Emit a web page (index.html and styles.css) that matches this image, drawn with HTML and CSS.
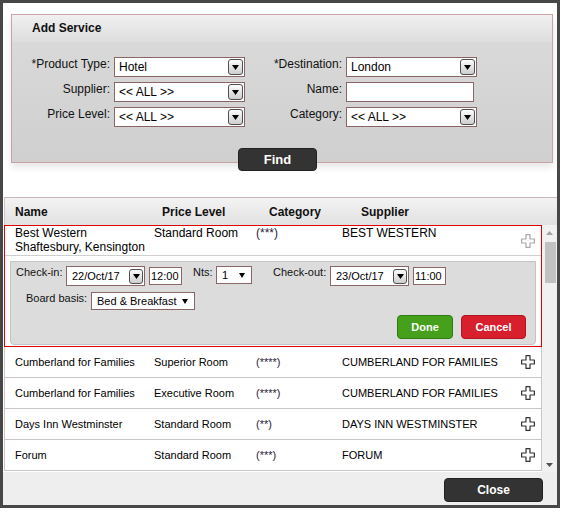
FILE: index.html
```html
<!DOCTYPE html>
<html>
<head>
<meta charset="utf-8">
<link rel="stylesheet" href="styles.css">
</head>
<body>
<div class="frame">
  <div class="search">
    <div class="search-title">Add Service</div>
    <div class="search-body">
      <div class="form">
        <label class="flabel">*Product Type:</label>
        <div class="sel"><span>Hotel</span><span class="dd"><svg width="7" height="5" viewBox="0 0 7 5"><path d="M0 0h7l-3.5 5z"/></svg></span></div>
        <label class="flabel">*Destination:</label>
        <div class="sel"><span>London</span><span class="dd"><svg width="7" height="5" viewBox="0 0 7 5"><path d="M0 0h7l-3.5 5z"/></svg></span></div>

        <label class="flabel">Supplier:</label>
        <div class="sel"><span>&lt;&lt; ALL &gt;&gt;</span><span class="dd"><svg width="7" height="5" viewBox="0 0 7 5"><path d="M0 0h7l-3.5 5z"/></svg></span></div>
        <label class="flabel">Name:</label>
        <div class="input"></div>

        <label class="flabel">Price Level:</label>
        <div class="sel"><span>&lt;&lt; ALL &gt;&gt;</span><span class="dd"><svg width="7" height="5" viewBox="0 0 7 5"><path d="M0 0h7l-3.5 5z"/></svg></span></div>
        <label class="flabel">Category:</label>
        <div class="sel"><span>&lt;&lt; ALL &gt;&gt;</span><span class="dd"><svg width="7" height="5" viewBox="0 0 7 5"><path d="M0 0h7l-3.5 5z"/></svg></span></div>
      </div>
      <div class="find-wrap"><div class="btn-dark find">Find</div></div>
    </div>
  </div>

  <div class="results">
    <div class="thead">
      <span class="h-name">Name</span>
      <span class="h-price">Price Level</span>
      <span class="h-cat">Category</span>
      <span class="h-sup">Supplier</span>
    </div>
    <div class="tbody">
      <div class="list">
        <div class="xrow">
          <div class="xmain">
            <span class="c-name">Best Western<br>Shaftesbury, Kensington</span>
            <span class="c-price">Standard Room</span>
            <span class="c-cat">(***)</span>
            <span class="c-sup">BEST WESTERN</span>
            <svg class="plus light" width="14" height="14" viewBox="0 0 14 14"><path d="M5 0.6h4v4.4h4.4v4h-4.4v4.4h-4v-4.4h-4.4v-4h4.4z"/></svg>
          </div>
          <div class="xpanel">
            <div class="prow1">
              <span class="plabel l-ci">Check-in:</span>
              <div class="dsel"><span>22/Oct/17</span><span class="dd small"><svg width="7" height="5" viewBox="0 0 7 5"><path d="M0 0h7l-3.5 5z"/></svg></span></div>
              <div class="time">12:00</div>
              <span class="plabel l-nts">Nts:</span>
              <div class="nsel"><span>1</span><svg width="6" height="5" viewBox="0 0 6 5"><path d="M0 0h6l-3 5z"/></svg></div>
              <span class="plabel l-co">Check-out:</span>
              <div class="dsel"><span>23/Oct/17</span><span class="dd small"><svg width="7" height="5" viewBox="0 0 7 5"><path d="M0 0h7l-3.5 5z"/></svg></span></div>
              <div class="time">11:00</div>
            </div>
            <div class="prow2">
              <span class="plabel l-bb">Board basis:</span>
              <div class="bsel"><span>Bed &amp; Breakfast</span><svg width="6" height="5" viewBox="0 0 6 5"><path d="M0 0h6l-3 5z"/></svg></div>
            </div>
            <div class="pbtns">
              <div class="btn done">Done</div>
              <div class="btn cancel">Cancel</div>
            </div>
          </div>
        </div>

        <div class="row">
          <span class="c-name">Cumberland for Families</span>
          <span class="c-price">Superior Room</span>
          <span class="c-cat">(****)</span>
          <span class="c-sup">CUMBERLAND FOR FAMILIES</span>
          <svg class="plus" width="14" height="14" viewBox="0 0 14 14"><path d="M5 0.6h4v4.4h4.4v4h-4.4v4.4h-4v-4.4h-4.4v-4h4.4z"/></svg>
        </div>
        <div class="row">
          <span class="c-name">Cumberland for Families</span>
          <span class="c-price">Executive Room</span>
          <span class="c-cat">(****)</span>
          <span class="c-sup">CUMBERLAND FOR FAMILIES</span>
          <svg class="plus" width="14" height="14" viewBox="0 0 14 14"><path d="M5 0.6h4v4.4h4.4v4h-4.4v4.4h-4v-4.4h-4.4v-4h4.4z"/></svg>
        </div>
        <div class="row">
          <span class="c-name">Days Inn Westminster</span>
          <span class="c-price">Standard Room</span>
          <span class="c-cat">(**)</span>
          <span class="c-sup">DAYS INN WESTMINSTER</span>
          <svg class="plus" width="14" height="14" viewBox="0 0 14 14"><path d="M5 0.6h4v4.4h4.4v4h-4.4v4.4h-4v-4.4h-4.4v-4h4.4z"/></svg>
        </div>
        <div class="row">
          <span class="c-name">Forum</span>
          <span class="c-price">Standard Room</span>
          <span class="c-cat">(***)</span>
          <span class="c-sup">FORUM</span>
          <svg class="plus" width="14" height="14" viewBox="0 0 14 14"><path d="M5 0.6h4v4.4h4.4v4h-4.4v4.4h-4v-4.4h-4.4v-4h4.4z"/></svg>
        </div>
      </div>
      <div class="scrollbar">
        <div class="sb-btn sb-up"><svg width="7" height="4" viewBox="0 0 7 4"><path d="M0 4h7l-3.5-4z"/></svg></div>
        <div class="thumb"></div>
        <div class="sb-btn sb-down"><svg width="7" height="4" viewBox="0 0 7 4"><path d="M0 0h7l-3.5 4z"/></svg></div>
      </div>
    </div>
  </div>

  <div class="footer">
    <div class="btn-dark close">Close</div>
  </div>
</div>
</body>
</html>
```

FILE: styles.css
```css
* { box-sizing: border-box; }
html, body { margin: 0; padding: 0; background: #fff; }
body { font-family: "Liberation Sans", Arial, sans-serif; color: #000; }

.frame {
  width: 560px;
  height: 508px;
  border: 3px solid #474747;
  background: #fff;
  display: flex;
  flex-direction: column;
}

/* ---------- search panel ---------- */
.search {
  margin: 11px 4px 0 8px;
  border: 1px solid #c9a4a4;
  background: linear-gradient(#dbdbdb, #cfcfcf);
  box-shadow: 0 4px 7px rgba(0, 0, 0, 0.10);
}
.search-title {
  height: 27px;
  line-height: 27px;
  padding-left: 20px;
  font-size: 12px;
  font-weight: bold;
  color: #111;
  background: linear-gradient(#f0f0f0, #dddddd);
}
.search-body { padding-top: 15px; }
.form {
  display: grid;
  grid-template-columns: 98px 131px 93px 131px;
  grid-auto-rows: 20px;
  column-gap: 4px;
  row-gap: 5px;
}
.flabel {
  font-size: 12px;
  line-height: 14px;
  text-align: right;
  color: #111;
  align-self: start;
}
.sel, .input {
  height: 20px;
  border: 1px solid #8b6666;
  background: #fff;
}
.sel {
  display: flex;
  align-items: center;
  justify-content: space-between;
  padding: 0 1px 0 4px;
  font-size: 12px;
}
.input { width: 128px; }
.dd {
  width: 15px;
  height: 16px;
  border: 1px solid #505050;
  border-radius: 3px;
  background: linear-gradient(#fdfdfd, #cdcdcd);
  display: flex;
  align-items: center;
  justify-content: center;
}
.dd.small { width: 14px; height: 15px; }
.dd svg, .nsel svg, .bsel svg { fill: #000; display: block; }

.find-wrap {
  margin: 21px 0 -9px 226px;
}
.btn-dark {
  background: #333;
  border: 1px solid #222;
  border-radius: 4px;
  color: #fff;
  font-weight: bold;
  text-align: center;
}
.find {
  width: 79px;
  height: 23px;
  line-height: 21px;
  font-size: 13px;
}

/* ---------- results ---------- */
.results {
  margin: 34px 0 0 1px;
}
.thead {
  height: 28px;
  border-top: 1px solid #c9b6b6;
  border-left: 1px solid #d6c4c4;
  background: linear-gradient(#f3f3f3, #e1e1e1);
  display: flex;
  align-items: center;
  padding-left: 10px;
  font-size: 12px;
  font-weight: bold;
  color: #111;
}
.h-name { width: 147px; }
.h-price { width: 107px; }
.h-cat { width: 92px; }

.tbody {
  display: flex;
  height: 247px;
}
.list {
  width: 538px;
  height: 247px;
  overflow: hidden;
  background: #fff;
}
.c-name { width: 139px; flex: none; }
.c-price { width: 102px; flex: none; }
.c-cat { width: 86px; flex: none; color: #2a2238; }
.c-sup { flex: 1; }
.plus {
  flex: none;
  margin-right: 6px;
  fill: #fff;
  stroke: #333;
  stroke-width: 1.2;
  stroke-linejoin: round;
}
.plus.light { stroke: #a8a8a8; align-self: center; }

.xrow {
  border: 1px solid #e00000;
}
.xmain {
  height: 30px;
  border-bottom: 1px solid #cfcfcf;
  display: flex;
  align-items: flex-start;
  padding-left: 10px;
  font-size: 12px;
  line-height: 14px;
}
.xpanel {
  height: 84px;
  margin: 5px 5px 1px 5px;
  border: 1px solid #c4c4c4;
  border-radius: 0 0 4px 4px;
  background: #dcdcdc;
  padding: 4px 9px 0 5px;
  font-size: 11px;
}
.plabel {
  line-height: 13px;
  color: #111;
  flex: none;
}
.prow1 { display: flex; align-items: flex-start; height: 20px; }
.l-ci { width: 50px; }
.l-nts { width: 23px; margin-left: 11px; }
.l-co { width: 57px; margin-left: 21px; }
.dsel {
  width: 79px;
  height: 20px;
  border: 1px solid #8b6666;
  background: #fff;
  display: flex;
  align-items: center;
  justify-content: space-between;
  padding: 0 1px 0 5px;
  flex: none;
}
.time {
  width: 33px;
  height: 18px;
  margin: 1px 0 0 4px;
  border: 1px solid #8b6666;
  background: #fff;
  line-height: 16px;
  padding-left: 1px;
  flex: none;
}
.nsel, .bsel {
  height: 18px;
  border: 1px solid #8b6666;
  background: #fff;
  display: flex;
  align-items: center;
  justify-content: space-between;
  padding: 0 6px 0 5px;
  flex: none;
}
.nsel { width: 36px; }
.prow2 { display: flex; align-items: flex-start; margin-top: 6px; padding-left: 10px; height: 18px; }
.l-bb { width: 65px; }
.bsel { width: 104px; }
.pbtns {
  display: flex;
  justify-content: flex-end;
  gap: 8px;
  margin-top: 5px;
}
.btn {
  height: 24px;
  line-height: 22px;
  border-radius: 4px;
  color: #fff;
  font-weight: bold;
  font-size: 11px;
  text-align: center;
}
.done { width: 56px; background: #45a11b; border: 1px solid #2f7d10; }
.cancel { width: 65px; background: #d81f2e; border: 1px solid #b3121f; }

.row {
  height: 31px;
  border-left: 1px solid #d6c4c4;
  border-right: 1px solid #c8c8c8;
  border-bottom: 1px solid #c6c6c6;
  display: flex;
  align-items: center;
  padding-left: 10px;
  font-size: 11px;
}

.scrollbar {
  width: 15px;
  height: 247px;
  background: #f1f1f1;
  display: flex;
  flex-direction: column;
}
.sb-btn {
  height: 16px;
  display: flex;
  align-items: center;
  justify-content: center;
  fill: #a3a3a3;
}
.sb-btn svg { display: block; }
.sb-down { margin-top: auto; height: 15px; fill: #505050; }
.sb-up { fill: #a3a3a3; }
.thumb {
  margin: 1px 0 0 3px;
  width: 11px;
  height: 41px;
  background: #c1c1c1;
}

/* ---------- footer ---------- */
.footer {
  flex: 1;
  background: #eeeeee;
  display: flex;
  justify-content: flex-end;
  padding: 6px 14px 0 0;
}
.close {
  width: 99px;
  height: 24px;
  line-height: 22px;
  font-size: 12px;
}
```
